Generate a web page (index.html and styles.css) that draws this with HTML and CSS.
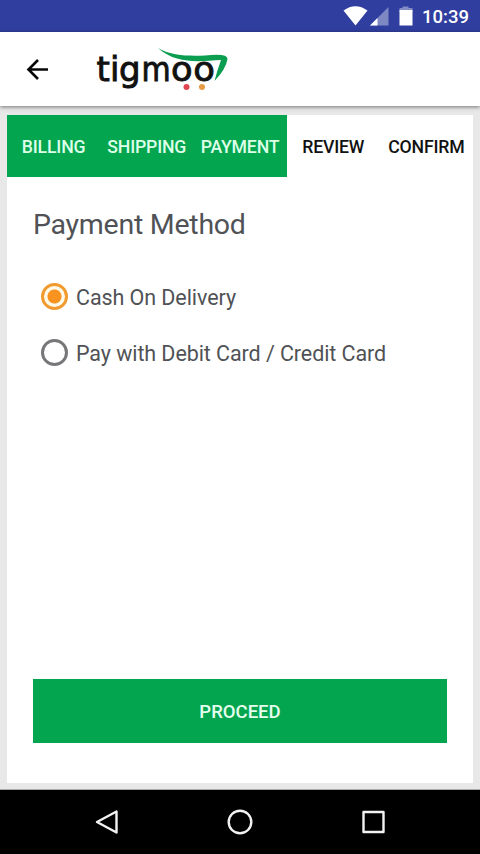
FILE: index.html
```html
<!DOCTYPE html>
<html lang="en">
<head>
<meta charset="utf-8">
<title>Payment Method</title>
<link rel="stylesheet" href="styles.css">
</head>
<body>
<div class="status">
  <svg width="80" height="32" viewBox="340 0 80 32" fill="#fff">
    <path d="M343.500 10.500Q355.500 2 367.500 10.500L355.500 25.500Z"/>
    <path d="M388.500 7V25.500H370Z" opacity=".38"/>
    <path d="M377.500 18V25.500H370Z"/>
    <path d="M402.500 6.500H408.500V8H412.500V12H399.500V8H402.500Z" opacity=".4"/>
    <path d="M399.500 10H412.500V25.500H399.500Z"/>
  </svg>
  <span class="clock">10:39</span>
</div>
<header class="appbar">
  <svg width="240" height="74" viewBox="0 32 240 74">
    <path d="M48 69.500H28.500M38 60L28.500 69.500L38 79" fill="none" stroke="#080808" stroke-width="2.600"/>
    <g class="logo">
      <text x="96.500" y="80.500">t</text><text x="110" y="80.500">i</text><text x="119" y="80.500">g</text>
      <text transform="translate(141.500 80.500) scale(.88 1)">m</text>
      <text transform="translate(171 80.500) scale(1.040 1)">o</text><text transform="translate(193.200 80.500) scale(1.040 1)">o</text>
    </g>
    <path d="M158 48C172 56 188 56 205 55.500Q228 53 227.500 59Q226 69 214.500 81Q217 71 221 60C200 61 177 65 158 48Z" fill="#0b9d50"/>
    <circle cx="186.500" cy="87" r="3" fill="#df4650"/>
    <circle cx="202" cy="87" r="3" fill="#e79b45"/>
  </svg>
</header>
<main class="page">
  <section class="card">
    <nav class="steps">
      <span class="done">BILLING</span><span class="done">SHIPPING</span><span class="done">PAYMENT</span><span>REVIEW</span><span>CONFIRM</span>
    </nav>
    <div class="content">
      <h1>Payment Method</h1>
      <label class="option"><i class="radio on"></i><span>Cash On Delivery</span></label>
      <label class="option"><i class="radio"></i><span>Pay with Debit Card / Credit Card</span></label>
      <button>PROCEED</button>
    </div>
  </section>
</main>
<footer class="navbar">
  <svg width="480" height="64" viewBox="0 790 480 64" fill="none" stroke="#f2f2f2" stroke-width="2.400" stroke-linejoin="round">
    <path d="M97 822L116.500 811.500V832.500Z"/>
    <circle cx="240" cy="822" r="11.300"/>
    <rect x="363.500" y="812" width="20" height="20"/>
  </svg>
</footer>
</body>
</html>
```
FILE: styles.css
```css
* { box-sizing: border-box; }
body { margin: 0; width: 480px; height: 854px; display: flex; flex-direction: column; overflow: hidden; background: #e8e8e8; font-family: Roboto, "Liberation Sans", sans-serif; }
svg { display: block; }
.status { height: 32px; flex: none; display: flex; justify-content: flex-end; background: #303f9f; color: #fff; padding-right: 11px; }
.clock { width: 49px; padding-left: 2px; line-height: 34px; font-size: 18.500px; font-weight: 500; white-space: nowrap; }
.appbar { height: 74px; flex: none; background: #fff; box-shadow: 0 1px 4px rgba(0,0,0,.5); }
.logo { font-family: "DejaVu Sans", sans-serif; font-size: 34px; fill: #111; stroke: #111; stroke-width: .9px; }
.page { flex: 1; padding: 9px 7px 6px; border-bottom: 1px solid #aaa; display: flex; }
.card { flex: 1; background: #fff; display: flex; flex-direction: column; }
.steps { display: grid; grid-template-columns: repeat(5, 1fr); height: 62px; flex: none; font-size: 17.700px; letter-spacing: -.2px; font-weight: 500; color: #111; }
.steps span { display: flex; align-items: center; justify-content: center; padding-top: 1px; white-space: nowrap; }
.steps .done { background: #04a54f; color: #dcffe8; }
.content { flex: 1; display: flex; flex-direction: column; padding: 29px 26px 40px; color: #505256; }
h1 { margin: 0 0 29px; font-size: 28.500px; letter-spacing: -.25px; line-height: 38px; font-weight: 400; }
.option { display: flex; align-items: center; gap: 8px; height: 46px; margin-bottom: 10px; padding-left: 8px; font-size: 21.500px; letter-spacing: -.08px; white-space: nowrap; }
.option span { padding-top: 2px; }
.radio { width: 27px; height: 27px; flex: none; border: 3px solid #77777a; border-radius: 50%; }
.radio.on { border-color: #f09a30; background: radial-gradient(circle, #f7931e 6.500px, #fff9e8 7.500px); }
button { margin: auto 0 0; padding: 2px 0 0; height: 64px; flex: none; border: 0; background: #04a54f; color: #e6ffef; font: 500 18.500px Roboto, sans-serif; }
.navbar { height: 64px; flex: none; background: #000; }
```
